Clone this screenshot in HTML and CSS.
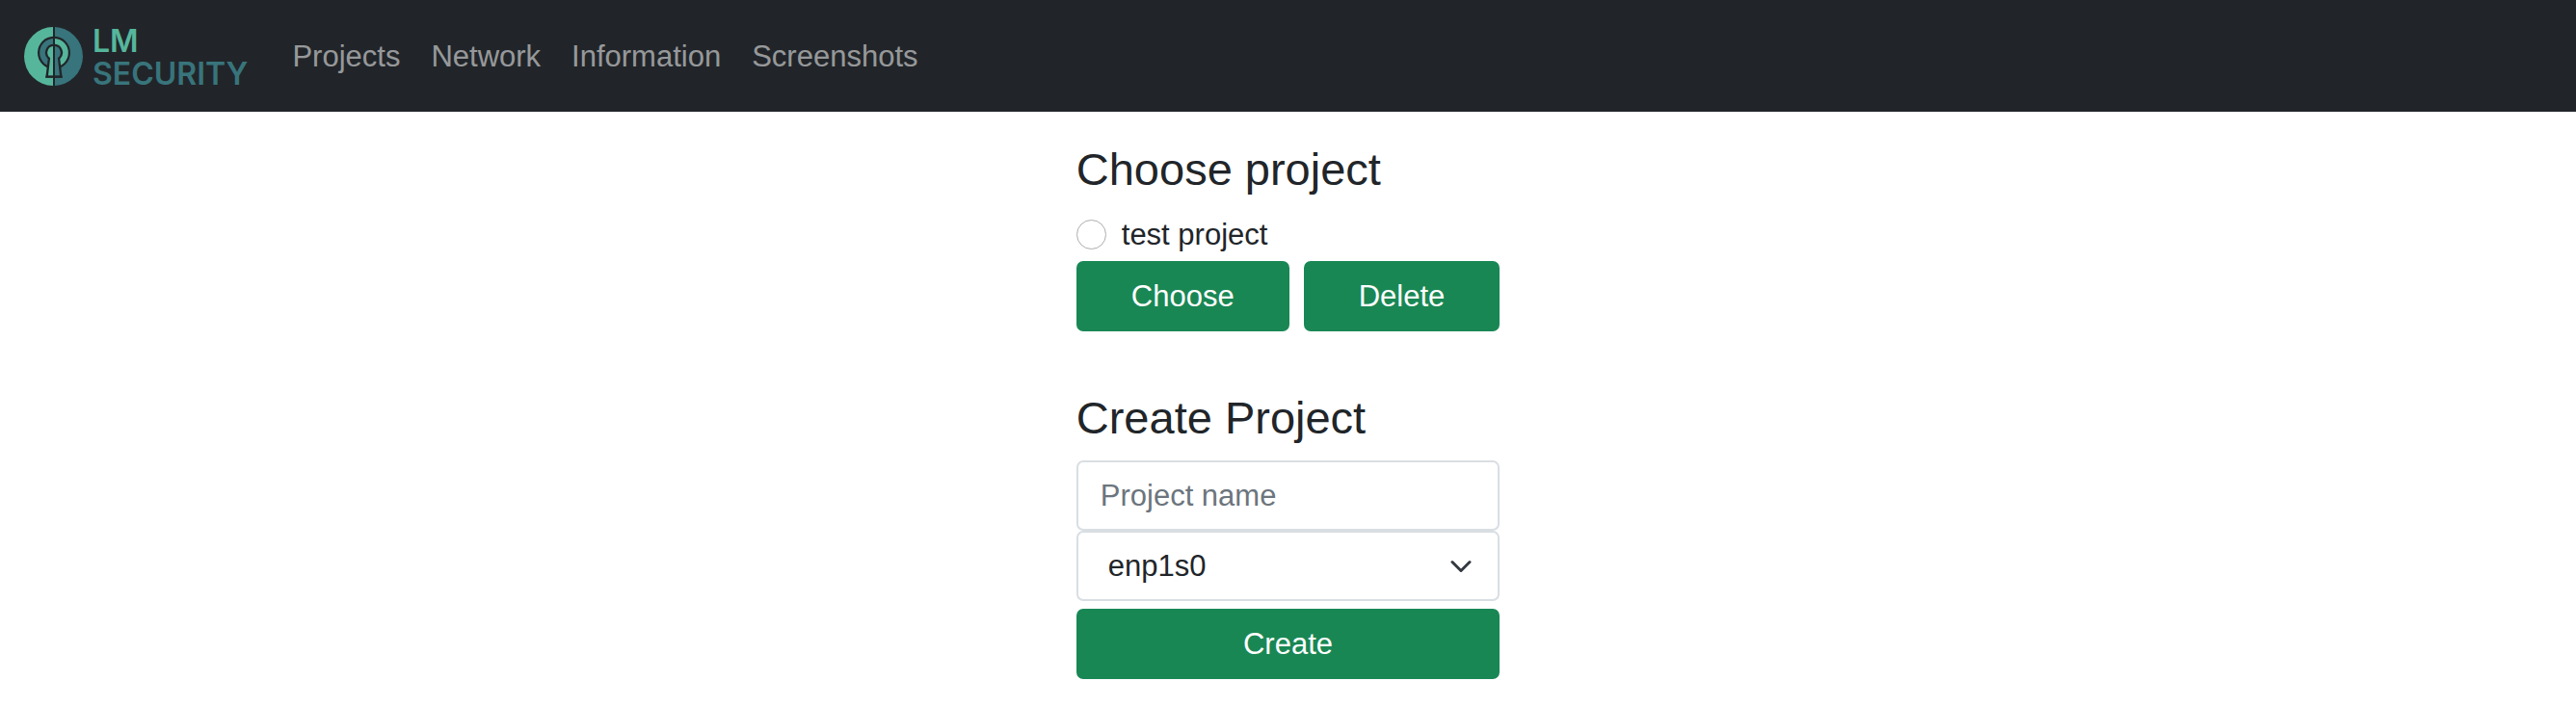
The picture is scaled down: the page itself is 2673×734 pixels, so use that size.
FILE: index.html
```html
<!DOCTYPE html>
<html lang="en">
<head>
<meta charset="utf-8">
<meta name="viewport" content="width=device-width, initial-scale=1">
<title>LM Security</title>
<link rel="stylesheet" href="styles.css">
</head>
<body>
<header class="navbar">
  <a class="brand" href="#" aria-label="LM Security">
    <svg class="brand-mark" viewBox="0 0 61 61" aria-hidden="true">
      <defs>
        <clipPath id="left"><rect x="0" y="0" width="30" height="61"/></clipPath>
        <clipPath id="right"><rect x="32" y="0" width="29" height="61"/></clipPath>
      </defs>
      <g clip-path="url(#left)">
        <circle cx="30.5" cy="30.5" r="30.5" fill="#56b69c"/>
        <circle cx="31" cy="26.7" r="17" fill="#212529"/>
        <circle cx="31" cy="26.7" r="14.8" fill="#38747b"/>
        <path d="M31 17.700a9 9 0 0 0-6.300 15.500L22.300 52.700H31z" fill="#212529"/>
        <path d="M31 20a6.700 6.700 0 0 0-3.900 12.200L25 50.600H31z" fill="#56b69c"/>
      </g>
      <g clip-path="url(#right)">
        <circle cx="30.5" cy="30.5" r="30.5" fill="#38747b"/>
        <circle cx="31" cy="26.7" r="17" fill="#212529"/>
        <circle cx="31" cy="26.7" r="14.8" fill="#56b69c"/>
        <path d="M31 17.700a9 9 0 0 1 6.300 15.500L39.700 52.700H31z" fill="#212529"/>
        <path d="M31 20a6.700 6.700 0 0 1 3.900 12.200L37 50.600H31z" fill="#38747b"/>
      </g>
      <path d="M22.300 51.700H39.700" stroke="#212529" stroke-width="2"/>
    </svg>
    <span class="brand-text"><span class="brand-top">LM</span><span class="brand-bottom">SECURITY</span></span>
  </a>
  <nav class="nav-links">
    <a href="#">Projects</a>
    <a href="#">Network</a>
    <a href="#">Information</a>
    <a href="#">Screenshots</a>
  </nav>
</header>
<main class="content">
  <form class="panel">
    <h1 class="title">Choose project</h1>
    <label class="option" for="project-test"><input class="radio" type="radio" id="project-test" name="project">test project</label>
    <div class="actions">
      <button class="btn" type="button">Choose</button>
      <button class="btn" type="button">Delete</button>
    </div>
  </form>
  <form class="panel">
    <h1 class="title">Create Project</h1>
    <input class="field" type="text" placeholder="Project name" aria-label="Project name">
    <select class="field select" aria-label="Network interface"><option>enp1s0</option></select>
    <button class="btn create" type="button">Create</button>
  </form>
</main>
</body>
</html>
```
FILE: styles.css
```css
*, *::before, *::after { box-sizing: border-box; }

body {
  margin: 0;
  background: #fff;
  color: #212529;
  font: 31px/47px "Liberation Sans", Arial, sans-serif;
}

.navbar {
  display: flex;
  align-items: center;
  gap: 46px;
  min-height: 116px;
  padding: 0 25px;
  background: #212529;
}

.brand {
  display: flex;
  align-items: center;
  gap: 10px;
  text-decoration: none;
}

.brand-mark { width: 61px; height: 61px; }

.brand-text {
  display: flex;
  flex-direction: column;
  padding-top: 3px;
  font: 600 32px/34px Inter, sans-serif;
}

.brand-top { color: #56b69c; }
.brand-bottom { color: #38747b; }

.nav-links { display: flex; gap: 32px; }
.nav-links a { color: rgba(255, 255, 255, 0.55); text-decoration: none; }

.content {
  display: grid;
  gap: 62px;
  width: fit-content;
  margin: 0 auto;
  padding: 32px 0;
}

.panel { display: flex; flex-direction: column; }

.title {
  margin: 0 0 16px;
  font-size: 47px;
  font-weight: 400;
  line-height: 56px;
}

.option {
  display: flex;
  align-items: center;
  gap: 16px;
  margin-bottom: 4px;
}

.radio {
  appearance: none;
  width: 31px;
  height: 31px;
  margin: 0;
  border: 1px solid #adadad;
  border-radius: 50%;
  background: #fff;
}

.radio:checked { border: 9px solid #198754; }

.actions { display: flex; gap: 15px; }

.btn {
  padding: 13px 57px;
  border: 0;
  border-radius: 7px;
  background: #198754;
  color: #fff;
  font: inherit;
}

.create { margin-top: 8px; }

.field {
  width: 100%;
  min-width: 0;
  height: 73px;
  margin: 0;
  padding: 11px 23px;
  border: 2px solid #d9dee2;
  border-radius: 7px;
  background: #fff;
  color: #212529;
  font: inherit;
}

.field::placeholder { color: #6c757d; opacity: 1; }

.title + .field { width: 0; min-width: 100%; }

.select {
  appearance: none;
  padding: 11px 70px 11px 31px;
  background: #fff url("data:image/svg+xml,%3Csvg xmlns='http://www.w3.org/2000/svg' viewBox='0 0 16 16'%3E%3Cpath fill='none' stroke='%23343a40' stroke-linecap='round' stroke-linejoin='round' stroke-width='2' d='m2 5 6 6 6-6'/%3E%3C/svg%3E") no-repeat right 26px center / 24px 24px;
}
```
